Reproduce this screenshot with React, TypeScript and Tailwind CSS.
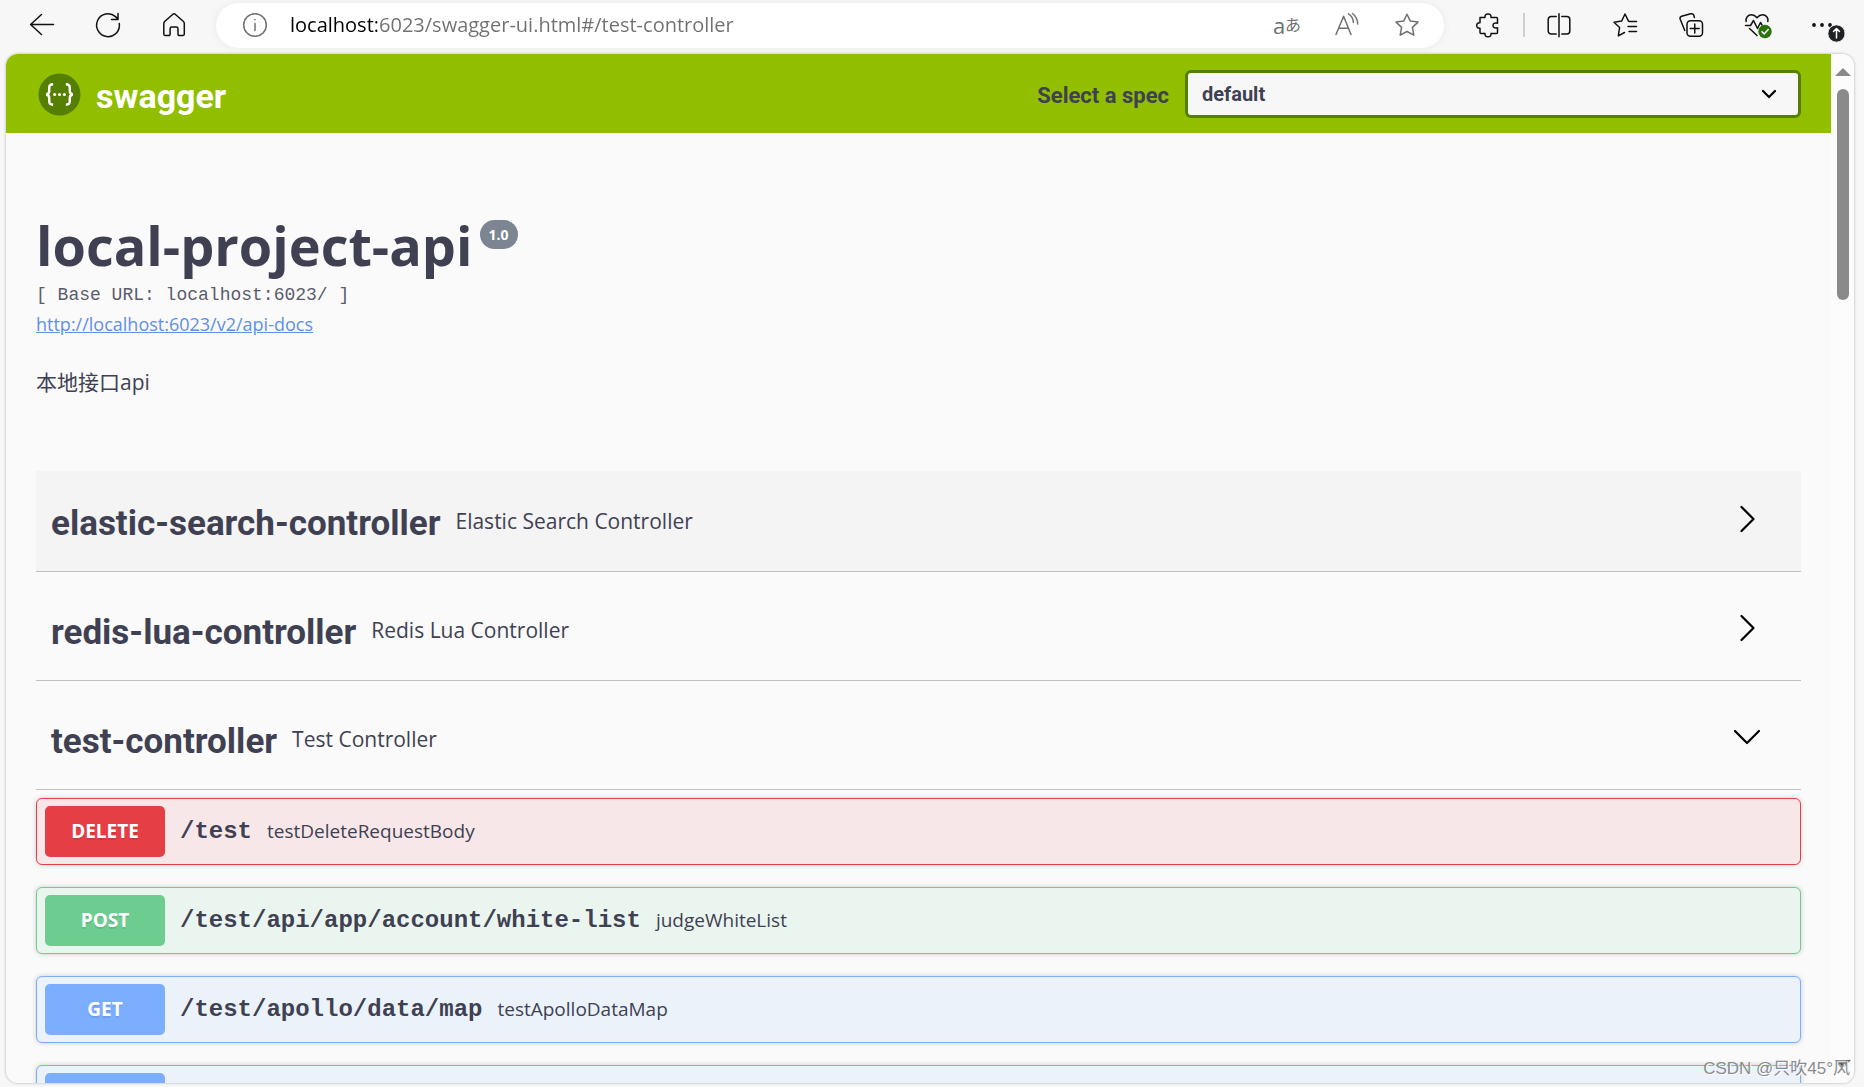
import React, { useState } from "react";

type Method = "DELETE" | "POST" | "GET";

const methodStyles: Record<Method, { row: string; badge: string }> = {
  DELETE: { row: "border-[#e53e44] bg-[#f7e7e8]", badge: "bg-[#e53e44]" },
  POST: { row: "border-[#6dcd91] bg-[#ebf5ef]", badge: "bg-[#6dcd91]" },
  GET: { row: "border-[#7baeff] bg-[#ebf2fa]", badge: "bg-[#7baeff]" },
};

const operations: { method: Method; label: string; path: string; summary: string }[] = [
  { method: "DELETE", label: "DELETE", path: "/test", summary: "testDeleteRequestBody" },
  { method: "POST", label: "POST", path: "/test/api/app/account/white-list", summary: "judgeWhiteList" },
  { method: "GET", label: "GET", path: "/test/apollo/data/map", summary: "testApolloDataMap" },
  { method: "GET", label: "", path: "", summary: "" },
];

const tags = [
  { name: "elastic-search-controller", description: "Elastic Search Controller", hovered: true },
  { name: "redis-lua-controller", description: "Redis Lua Controller", hovered: false },
  { name: "test-controller", description: "Test Controller", hovered: false },
];

const Icon: React.FC<{ children: React.ReactNode; className?: string }> = ({ children, className = "" }) => (
  <svg
    viewBox="0 0 24 24"
    className={`h-6 w-6 overflow-visible ${className}`}
    fill="none"
    stroke="currentColor"
    strokeWidth="1.5"
    strokeLinecap="round"
    strokeLinejoin="round"
    aria-hidden="true"
  >
    {children}
  </svg>
);

const ToolButton: React.FC<{ label: string; children: React.ReactNode }> = ({ label, children }) => (
  <button type="button" aria-label={label} className="relative h-6 w-6 shrink-0">
    <Icon>{children}</Icon>
  </button>
);

const BrowserBar: React.FC = () => {
  const [url, setUrl] = useState("localhost:6023/swagger-ui.html#/test-controller");

  return (
    <header className="flex h-[54px] shrink-0 items-center pb-1 text-[#111]">
      <nav className="flex gap-[42px] px-[30px]">
        <ToolButton label="Back">
          <path d="M23.5 11.5H.8M11.5 1.5.6 11.5l10.9 10" />
        </ToolButton>
        <ToolButton label="Refresh">
          <path d="M23.3 10.5A11.4 11.4 0 1 1 19.5 3.6l2 2M22 .6v6h-6.500" />
        </ToolButton>
        <ToolButton label="Home">
          <path d="M10.900 1.200a1.800 1.800 0 0 1 2.300 0l8 7c.8.7 1.100 1.300 1.100 2.300v10.400a1.600 1.600 0 0 1-1.600 1.600h-3.500a1.200 1.200 0 0 1-1.200-1.200v-5.600c0-1-.7-1.700-1.700-1.700h-4.500c-1 0-1.700.7-1.700 1.700v5.600a1.200 1.200 0 0 1-1.200 1.200H3.400a1.600 1.600 0 0 1-1.600-1.600V10.500c0-1 .3-1.600 1.100-2.300z" />
        </ToolButton>
      </nav>

      <div className="flex h-[45px] min-w-0 flex-1 items-center rounded-full bg-white pr-[25px] pl-[27px] text-[#707070] shadow-[0_0_10px_rgba(0,0,0,0.06)]">
        <button type="button" aria-label="View site information" className="h-6 w-6 shrink-0">
          <Icon>
            <circle cx="12" cy="12" r="11.300" />
            <path d="M12 10.500v7M12 6.500v.2" />
          </Icon>
        </button>
        <input
          type="text"
          aria-label="Address"
          value={url}
          onChange={(e) => setUrl(e.target.value)}
          className="ml-[23px] min-w-0 flex-1 bg-[linear-gradient(to_right,#000_87px,#707070_87px)] bg-clip-text font-['Open_Sans',sans-serif] text-xl text-transparent caret-black outline-none"
        />
        <div className="flex gap-9">
          <button
            type="button"
            aria-label="Translate"
            className="flex h-6 w-6 items-center justify-center font-['Open_Sans','Noto_Sans_CJK_JP',sans-serif] whitespace-nowrap"
          >
            <span className="text-[22px] leading-5">a</span>
            <span className="text-base leading-6">あ</span>
          </button>
          <ToolButton label="Read aloud">
            <path d="M1 21.500 8.600 3.200 16 21.500M3.500 15.200h10M13.500.8c3 1.800 4.700 4.800 4.900 8.700M17.500.5c3.300 2.500 5 6 5.200 10.500" />
          </ToolButton>
          <ToolButton label="Add to favorites">
            <path d="m12 1.200 3.300 6.900 7.700 1-5.600 5.300 1.400 7.800-6.800-3.700-6.800 3.700 1.400-7.800L1 9.100l7.700-1z" />
          </ToolButton>
        </div>
      </div>

      <div className="flex items-center pr-[29px] pl-8">
        <ToolButton label="Extensions">
          <path d="M4 4.500h5C8.600 2 10 .9 12 .9s3.400 1.100 3 3.600h5.500a1 1 0 0 1 1 1v4.700c-3-.6-4.500.3-4.500 2.300s1.500 2.900 4.500 2.300v4.700a1 1 0 0 1-1 1H15c.4 2.200-1 3.300-3 3.300s-3.400-1.100-3-3.300H5a1 1 0 0 1-1-1v-4.300c-2.200.2-3.300-.9-3.300-2.700S1.800 9.600 4 9.800z" />
        </ToolButton>
        <span className="mr-[22px] ml-[23px] h-6 w-0.5 bg-[#cfcfcf]" />
        <div className="flex gap-[42px]">
          <ToolButton label="Split screen">
            <path d="M12 .8v23M9.200 3.500H4.300A3 3 0 0 0 1.200 6.500v11.500a3 3 0 0 0 3.100 3h4.900M14.800 3.500h5a3 3 0 0 1 3 3v11.500a3 3 0 0 1-3 3h-5" />
          </ToolButton>
          <ToolButton label="Favorites">
            <path d="M16 8.200h-.5L12 1 8.700 8 1 9.200l5.600 5.300L5.300 22.800l6.200-3.300M16 8.500h7.500M15 13.500h8.500M16 18.500h7.500" />
          </ToolButton>
          <ToolButton label="Collections">
            <path d="M5.800 17.500 1.200 6.300C.7 4.900 1.300 3.700 2.600 3.200L11.700.8c1.500-.4 2.700.3 3.200 1.700l.5 2" />
            <rect x="8" y="7.800" width="15.500" height="15.500" rx="3.500" />
            <path d="M15.750 11v9M11.250 15.500h9" />
          </ToolButton>
          <ToolButton label="Browser essentials">
            <path d="M1.200 8.500C.3 4.500 3 1.800 6.500 1.800c2.300 0 4 1.200 5.500 3 1.500-1.800 3.200-3 5.500-3 3.500 0 6.200 2.700 5.300 6.700M.5 12.500h5l3-5 4 8 3-6 1.500 2.500M4.500 15.500l7.500 7" />
            <circle cx="20" cy="18.500" r="6.700" fill="#2b720b" stroke="none" />
            <path d="m17 18.700 2.200 2.200 4-4.300" stroke="#fff" />
          </ToolButton>
          <ToolButton label="Settings and more">
            <g fill="currentColor" stroke="none">
              <circle cx="3" cy="12" r="1.900" />
              <circle cx="11" cy="12" r="1.900" />
              <circle cx="19" cy="12" r="1.900" />
            </g>
            <circle cx="25.500" cy="20.500" r="8.700" fill="#202124" stroke="#f7f7f7" strokeWidth="1" />
            <path d="M25.500 25v-9M22.500 18.500l3-3 3 3" stroke="#fff" />
          </ToolButton>
        </div>
      </div>
    </header>
  );
};

const Topbar: React.FC = () => (
  <div className="flex h-[79px] items-center justify-between gap-4 bg-[#91bf00] px-[30px] pt-px font-['Roboto',sans-serif] font-bold">
    <a href="#" className="flex items-center gap-[15px] text-[34px] leading-none text-white">
      <svg viewBox="0 0 44 44" className="ml-0.5 h-[43px] w-[43px]" fill="none" aria-hidden="true">
        <circle cx="22" cy="22" r="21.500" fill="#547f00" />
        <path
          d="M15.500 11.500c-3 0-4 1-4 3.500v3.500c0 2-.8 3-3 3.500 2.200.5 3 1.500 3 3.500V29c0 2.500 1 3.500 4 3.500M28.500 11.500c3 0 4 1 4 3.500v3.500c0 2 .8 3 3 3.500-2.200.5-3 1.500-3 3.500V29c0 2.500-1 3.500-4 3.500"
          stroke="#fff"
          strokeWidth="2.500"
        />
        <g fill="#fff">
          <circle cx="17" cy="22" r="1.600" />
          <circle cx="22" cy="22" r="1.600" />
          <circle cx="27" cy="22" r="1.600" />
        </g>
      </svg>
      <span className="pt-1">swagger</span>
    </a>
    <div className="flex items-center gap-4 text-[#3f4153]">
      <label htmlFor="spec" className="pt-0.5 text-[22px] whitespace-nowrap">
        Select a spec
      </label>
      <div className="relative w-[616px] max-w-full">
        <select
          id="spec"
          className="h-12 w-full appearance-none rounded-md border-3 border-[#547f00] bg-[#f7f7f7] pr-12 pl-[14px] text-xl font-bold outline-none"
        >
          <option>default</option>
        </select>
        <svg
          viewBox="0 0 16 10"
          className="pointer-events-none absolute top-1/2 right-6 h-[10px] w-4 -translate-y-1/2"
          fill="none"
          stroke="#000"
          strokeWidth="2.200"
          strokeLinecap="round"
          aria-hidden="true"
        >
          <path d="m2 2 6 6 6-6" />
        </svg>
      </div>
    </div>
  </div>
);

const TagHeader: React.FC<{ name: string; description: string; hovered: boolean; open: boolean; onToggle: () => void }> = ({
  name,
  description,
  hovered,
  open,
  onToggle,
}) => (
  <button
    type="button"
    aria-expanded={open}
    onClick={onToggle}
    className={`flex h-[101px] w-full items-center gap-[15px] border-b border-[#bfc0c3] pr-[39px] pl-[15px] text-left ${hovered ? "bg-[#f4f4f4]" : ""}`}
  >
    <span className="pt-1 font-['Roboto',sans-serif] text-[35px] leading-none font-bold">{name}</span>
    <span className="flex-1 pt-px text-[21px]">{description}</span>
    <svg
      viewBox="0 0 30 30"
      className="mb-1 h-[30px] w-[30px]"
      fill="none"
      stroke="#000"
      strokeWidth="2.200"
      strokeLinecap="round"
      strokeLinejoin="round"
      aria-hidden="true"
    >
      <path d={open ? "m3 9 12 12L27 9" : "m9.500 3 12 12-12 12"} />
    </svg>
  </button>
);

const Operation: React.FC<{ method: Method; label: string; path: string; summary: string }> = ({
  method,
  label,
  path,
  summary,
}) => (
  <button
    type="button"
    className={`flex w-full items-center gap-[15px] rounded-md border p-[7px] pl-2 text-left shadow-[0_0_5px_rgba(0,0,0,0.19)] ${methodStyles[method].row}`}
  >
    <span
      className={`flex h-[51px] w-[120px] items-center justify-center rounded-[5px] text-[19px] font-bold text-white [text-shadow:0_2px_0_rgba(0,0,0,0.1)] ${methodStyles[method].badge}`}
    >
      {label}
    </span>
    <span className="pt-px font-['Liberation_Mono',monospace] text-2xl font-bold">{path}</span>
    <span className="text-[19px]">{summary}</span>
  </button>
);

const App: React.FC = () => {
  const [openTags, setOpenTags] = useState<string[]>(["test-controller"]);

  const toggle = (name: string) => {
    setOpenTags((prev) => (prev.includes(name) ? prev.filter((n) => n !== name) : [...prev, name]));
  };

  return (
    <div className="relative flex h-screen flex-col overflow-hidden bg-[#f7f7f7] font-['Open_Sans','Noto_Sans_CJK_SC',sans-serif] text-[#3f4153]">
      <BrowserBar />

      <div className="mr-[10px] mb-1 ml-[6px] flex min-h-0 flex-1 overflow-hidden rounded-xl bg-[#fafafa] shadow-[0_0_3px_rgba(0,0,0,0.3)]">
        <main className="min-w-0 flex-1 overflow-hidden">
          <Topbar />

          <div className="px-[30px] pt-[79px]">
            <section className="mb-[74px]">
              <h1 className="flex items-start text-[54px] leading-[66px] font-bold">
                local-project-api
                <span className="mt-2 ml-[7px] rounded-full bg-[#7d8492] px-[9px] text-sm leading-[29px] text-white">1.0</span>
              </h1>
              <p className="font-['Liberation_Mono',monospace] text-lg leading-[34px] text-[#5a5c6b]">
                [ Base URL: localhost:6023/ ]
              </p>
              <a href="#api-docs" className="block text-lg leading-6 text-[#5f8fe8] underline">
                http://localhost:6023/v2/api-docs
              </a>
              <p className="mt-[31px] text-[21px] leading-[30px]">本地接口api</p>
            </section>

            <section className="flex flex-col gap-2">
              {tags.map((tag) => (
                <TagHeader
                  key={tag.name}
                  {...tag}
                  open={openTags.includes(tag.name)}
                  onToggle={() => toggle(tag.name)}
                />
              ))}
              {openTags.includes("test-controller") && (
                <div className="flex flex-col gap-[22px]">
                  {operations.map((op, i) => (
                    <Operation key={i} {...op} />
                  ))}
                </div>
              )}
            </section>
          </div>
        </main>

        {/* Scrollbar */}
        <div className="flex w-[23px] shrink-0 flex-col items-center bg-[#fcfcfc] pt-[14px] pb-[15px]">
          <svg viewBox="0 0 16 8" className="h-2 w-4" aria-hidden="true">
            <path d="M0 8 8 0l8 8z" fill="#8a8a8a" />
          </svg>
          <div className="mt-[13px] h-[211px] w-3 rounded-full bg-[#8a8a8a]" />
          <svg viewBox="0 0 16 8" className="mt-auto h-2 w-4" aria-hidden="true">
            <path d="M0 0h16L8 8z" fill="#606060" />
          </svg>
        </div>
      </div>

      <div className="pointer-events-none absolute right-[14px] bottom-[6px] font-['Liberation_Sans','Noto_Sans_CJK_SC',sans-serif] text-[17px] leading-6 text-[#8c8c8c] [text-shadow:1px_1px_0_#fff]">
        CSDN @只吹45°风
      </div>
    </div>
  );
};

export default App;
